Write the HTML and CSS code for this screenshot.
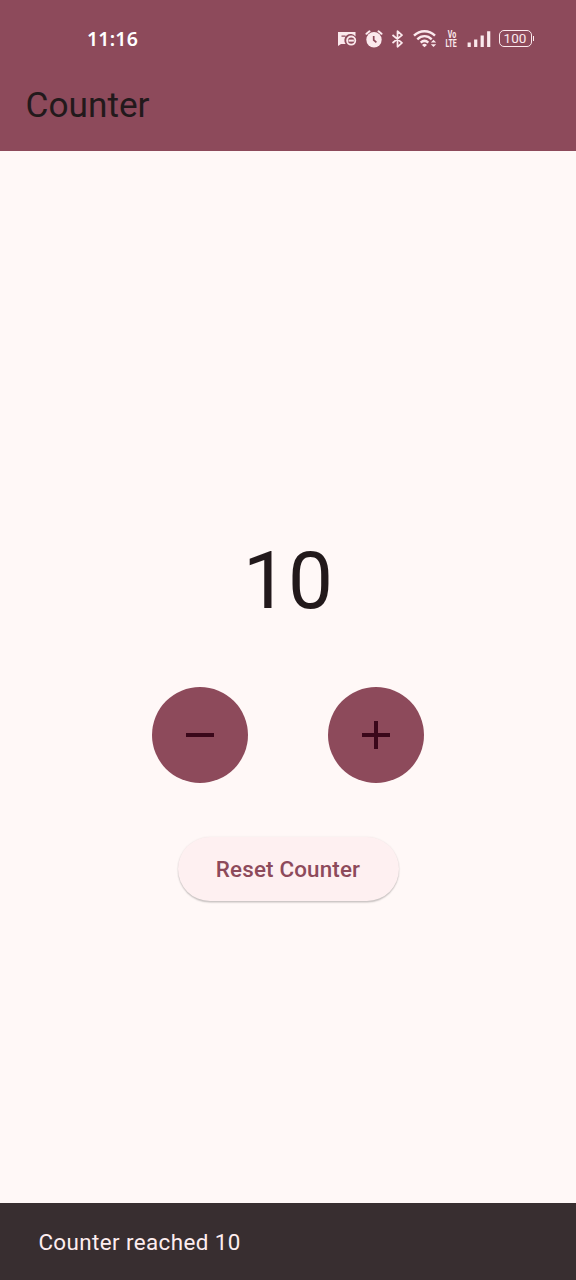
FILE: index.html
```html
<!DOCTYPE html>
<html lang="en">
<head>
<meta charset="utf-8">
<title>Counter</title>
<link rel="stylesheet" href="styles.css">
</head>
<body>
<div class="app">
  <header class="app-bar">
    <div class="status-bar">
      <span class="clock">11:16</span>
      <div class="status-icons">
        <svg class="icon-message" width="19" height="18" viewBox="0 0 19 18"><path fill="currentColor" fill-rule="evenodd" d="M0 2H17.500V6.500A5.800 5.800 0 0 0 7.600 14H3L0 16ZM3.500 5.600V6.800H7.500V5.600Z"/><circle cx="13.200" cy="10.600" r="4.100" fill="none" stroke="currentColor" stroke-width="1.800"/><path d="M10.500 10.600h5.400" stroke="currentColor" stroke-width="2"/></svg>
        <svg class="icon-alarm" width="18" height="18" viewBox="0 0 18 18"><circle cx="9" cy="9.700" r="7.700" fill="currentColor"/><path d="M1.500 3.800L4.500 1.300M16.500 3.800L13.500 1.300" stroke="currentColor" stroke-width="2" stroke-linecap="round"/><path class="icon-cutout" d="M8.700 6V10L11.400 12.300" fill="none" stroke-width="1.700"/></svg>
        <svg class="icon-bluetooth" width="13" height="18" viewBox="0 0 13 18"><path d="M1.500 5L11 12.800L6.500 16.800V1.200L11 5.200L1.500 13" fill="none" stroke="currentColor" stroke-width="1.700" stroke-linejoin="round"/></svg>
        <svg class="icon-wifi" width="25" height="19" viewBox="0 0 25 19"><g fill="none" stroke="currentColor" stroke-width="2.400"><path d="M1 6.700C7 .700 16 .700 22 6.700"/><path d="M4.300 10.300C8.600 6.100 14.400 6.100 18.700 10.300"/><path d="M7.700 13.700C10 11.500 13 11.500 15.300 13.700"/></g><path fill="currentColor" d="M9 15.900Q11.500 13.700 14 15.900L11.500 18.300ZM17.800 13.600L20.500 10.700L23.200 13.600ZM17.800 15.200L20.500 18L23.200 15.200Z"/></svg>
        <span class="volte"><span class="volte-line">Vo</span><span class="volte-line">LTE</span></span>
        <svg class="icon-signal" width="24" height="18" viewBox="0 0 24 18"><path d="M2.200 17V12.500M8.700 17V9.500M15.200 17V5.500M21.700 17V1.200" stroke="currentColor" stroke-width="3.200"/></svg>
        <span class="battery"><span class="battery-body">100</span><span class="battery-tip"></span></span>
      </div>
    </div>
    <h1 class="title">Counter</h1>
  </header>
  <main class="content">
    <div class="count">10</div>
    <div class="controls">
      <button class="round-button" aria-label="Decrease"><svg width="28" height="28" viewBox="0 0 28 28"><path d="M0 14H28" stroke="currentColor" stroke-width="4"/></svg></button>
      <button class="round-button" aria-label="Increase"><svg width="28" height="28" viewBox="0 0 28 28"><path d="M0 14H28M14 0V28" stroke="currentColor" stroke-width="4"/></svg></button>
    </div>
    <button class="reset">Reset Counter</button>
  </main>
  <footer class="snackbar">Counter reached 10</footer>
</div>
</body>
</html>
```
FILE: styles.css
```css
* {
  box-sizing: border-box;
}

body {
  margin: 0;
  font-family: Roboto, sans-serif;
  color: #22191b;
  background: #fff8f7;
}

.app {
  display: flex;
  flex-direction: column;
  width: 576px;
  height: 1280px;
}

.app-bar {
  height: 151px;
  background: #8d4a5b;
}

.status-bar {
  display: flex;
  justify-content: space-between;
  align-items: center;
  height: 77px;
  padding: 0 42.500px 0 87px;
  color: #fbe9ed;
}

.clock {
  font: 600 19.500px/24px "Noto Sans", sans-serif;
  letter-spacing: 0.200px;
  color: #fff;
}

.status-icons {
  display: flex;
  align-items: center;
}

.icon-alarm {
  margin-left: 8px;
}

.icon-cutout {
  stroke: #8d4a5b;
}

.icon-bluetooth {
  margin-left: 8px;
}

.icon-wifi {
  margin-left: 9px;
}

.volte {
  display: flex;
  flex-direction: column;
  width: 14px;
  margin-left: 7px;
  font: 700 10px/9px Roboto, sans-serif;
  align-items: center;
}

.volte-line {
  transform: scaleX(0.7);
}

.icon-signal {
  margin-left: 8px;
}

.battery {
  display: flex;
  align-items: center;
  margin-left: 8px;
}

.battery-body {
  width: 33px;
  height: 17px;
  border: 1.500px solid currentColor;
  border-radius: 5px;
  font: 400 13.500px/15px Roboto, sans-serif;
  text-align: center;
}

.battery-tip {
  width: 1px;
  height: 5px;
  margin-left: 1px;
  background: currentColor;
}

.title {
  margin: 8px 0 0 25.600px;
  font-weight: 400;
  font-size: 35.200px;
  line-height: 41px;
}

.content {
  flex: 1;
  display: flex;
  flex-direction: column;
  align-items: center;
  padding-top: 383px;
}

.count {
  height: 94px;
  font-size: 80px;
  line-height: 95px;
}

.controls {
  display: flex;
  gap: 80px;
  margin-top: 59px;
}

.round-button {
  display: flex;
  align-items: center;
  justify-content: center;
  width: 96px;
  height: 96px;
  padding: 0;
  border: 0;
  border-radius: 50%;
  color: #3a071a;
  background: #8d4a5b;
}

.reset {
  width: 221px;
  height: 64px;
  margin-top: 54px;
  padding: 0;
  border: 0;
  border-radius: 32px;
  font: 500 22.400px/32px Roboto, sans-serif;
  letter-spacing: 0.160px;
  color: #8d4a5b;
  background: #fef0f1;
  box-shadow: 0 1.600px 1.600px rgba(0, 0, 0, 0.2), 0 0 2px rgba(0, 0, 0, 0.08);
}

.snackbar {
  height: 77px;
  padding: 23px 38.400px 21px;
  font-size: 22.400px;
  line-height: 32px;
  letter-spacing: 0.400px;
  color: #feedef;
  background: #382e30;
}
```
